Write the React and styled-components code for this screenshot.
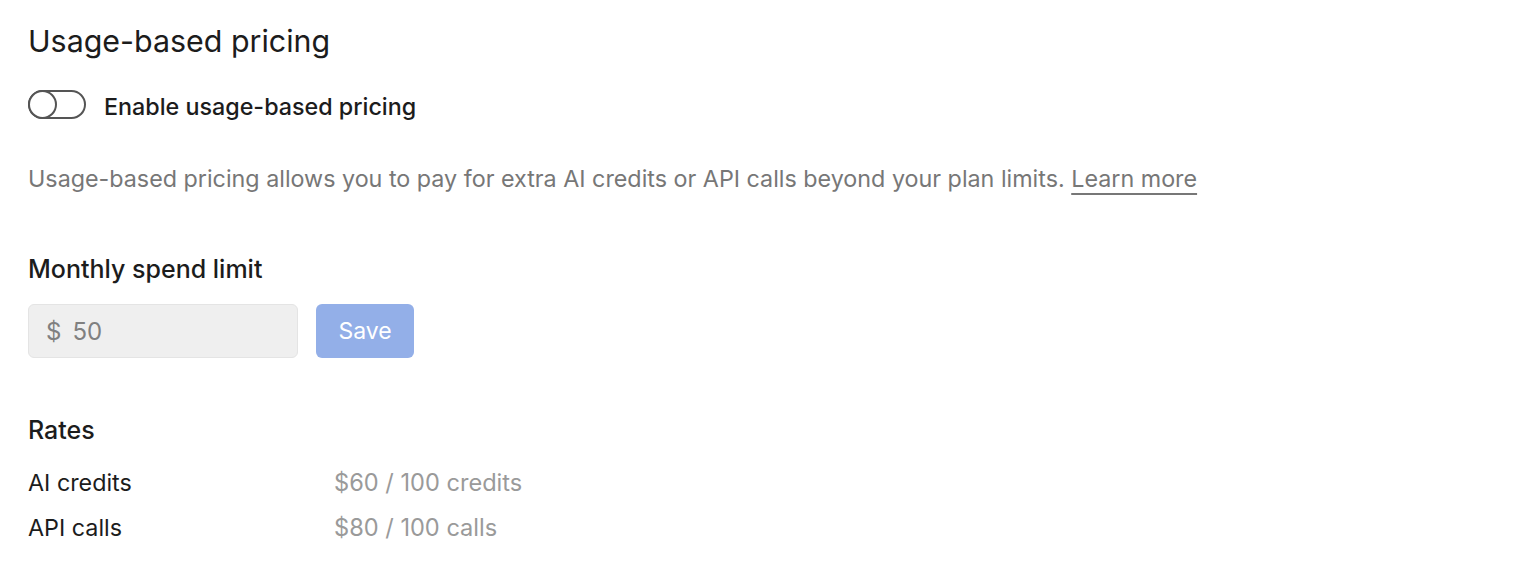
import React, { useState } from 'react'
import styled, { createGlobalStyle } from 'styled-components'

const GlobalStyle = createGlobalStyle`
  body {
    margin: 0;
    background: #ffffff;
    font-family: Inter, "Noto Sans", sans-serif;
    color: #1c1c1c;
  }
`

const Page = styled.div`
  padding: 21px 28px;
  display: flex;
  flex-direction: column;
`

const Title = styled.h1`
  margin: 0;
  font-size: 30.4px;
  font-weight: 400;
  line-height: 40px;
  color: #1c1c1c;
`

const ToggleRow = styled.label`
  display: flex;
  align-items: center;
  gap: 18px;
  margin-top: 27px;
  cursor: pointer;
`

const Switch = styled.span`
  width: 54px;
  height: 25px;
  border: 2px solid #555555;
  border-radius: 15px;
  display: flex;
  align-items: center;
  justify-content: ${p => (p.$on ? 'flex-end' : 'flex-start')};
  background: ${p => (p.$on ? '#555555' : '#fff')};
`

const Knob = styled.span`
  width: 29px;
  height: 29px;
  margin: -2px;
  border-radius: 50%;
  border: 2px solid #555555;
  box-sizing: border-box;
  background: #fff;
`

const ToggleLabel = styled.span`
  font-size: 23.3px;
  font-weight: 500;
  color: #1c1c1c;
  margin-top: 4px;
`

const Description = styled.p`
  margin: 43px 0 0;
  font-size: 23.3px;
  line-height: 30px;
  color: #777777;

  a {
    color: #777777;
    text-decoration: underline;
    text-underline-offset: 6px;
    text-decoration-thickness: 2px;
  }
`

const SectionLabel = styled.div`
  font-size: 25px;
  font-weight: 500;
  line-height: 30px;
  color: #1c1c1c;
  margin-top: ${p => p.$top}px;
`

const InputRow = styled.div`
  display: flex;
  gap: 18px;
  margin-top: 20px;
`

const AmountBox = styled.div`
  width: 270px;
  height: 54px;
  box-sizing: border-box;
  background: #efefef;
  border: 1px solid #e4e4e4;
  border-radius: 6px;
  display: flex;
  align-items: center;
  padding-left: 17px;
  gap: 11px;
  font-size: 24px;
  color: #808080;
`

const SaveButton = styled.button`
  width: 98px;
  height: 54px;
  border: none;
  border-radius: 6px;
  background: #93afe8;
  color: #ffffff;
  font-family: inherit;
  font-size: 23px;
  font-weight: 400;
`

const RateList = styled.div`
  display: flex;
  flex-direction: column;
  gap: 15px;
  margin-top: 23px;
`

const RateRow = styled.div`
  display: grid;
  grid-template-columns: 306px auto;
  font-size: 23.3px;
  line-height: 30px;
`

const RateName = styled.span`
  color: #1c1c1c;
`

const RateValue = styled.span`
  color: #9a9a9a;
  font-size: 23.6px;
`

const rates = [
  { name: 'AI credits', value: '$60 / 100 credits' },
  { name: 'API calls', value: '$80 / 100 calls' },
]

export default function App() {
  const [on, setOn] = useState(false)

  return (
    <Page>
      <GlobalStyle />
      <Title>Usage-based pricing</Title>
      <ToggleRow onClick={() => setOn(!on)}>
        <Switch $on={on}><Knob /></Switch>
        <ToggleLabel>Enable usage-based pricing</ToggleLabel>
      </ToggleRow>
      <Description>
        Usage-based pricing allows you to pay for extra AI credits or API calls beyond your plan limits.{' '}
        <a href="#">Learn more</a>
      </Description>
      <SectionLabel $top={60}>Monthly spend limit</SectionLabel>
      <InputRow>
        <AmountBox><span>$</span><span>50</span></AmountBox>
        <SaveButton>Save</SaveButton>
      </InputRow>
      <SectionLabel $top={57}>Rates</SectionLabel>
      <RateList>
        {rates.map(r => (
          <RateRow key={r.name}>
            <RateName>{r.name}</RateName>
            <RateValue>{r.value}</RateValue>
          </RateRow>
        ))}
      </RateList>
    </Page>
  )
}
